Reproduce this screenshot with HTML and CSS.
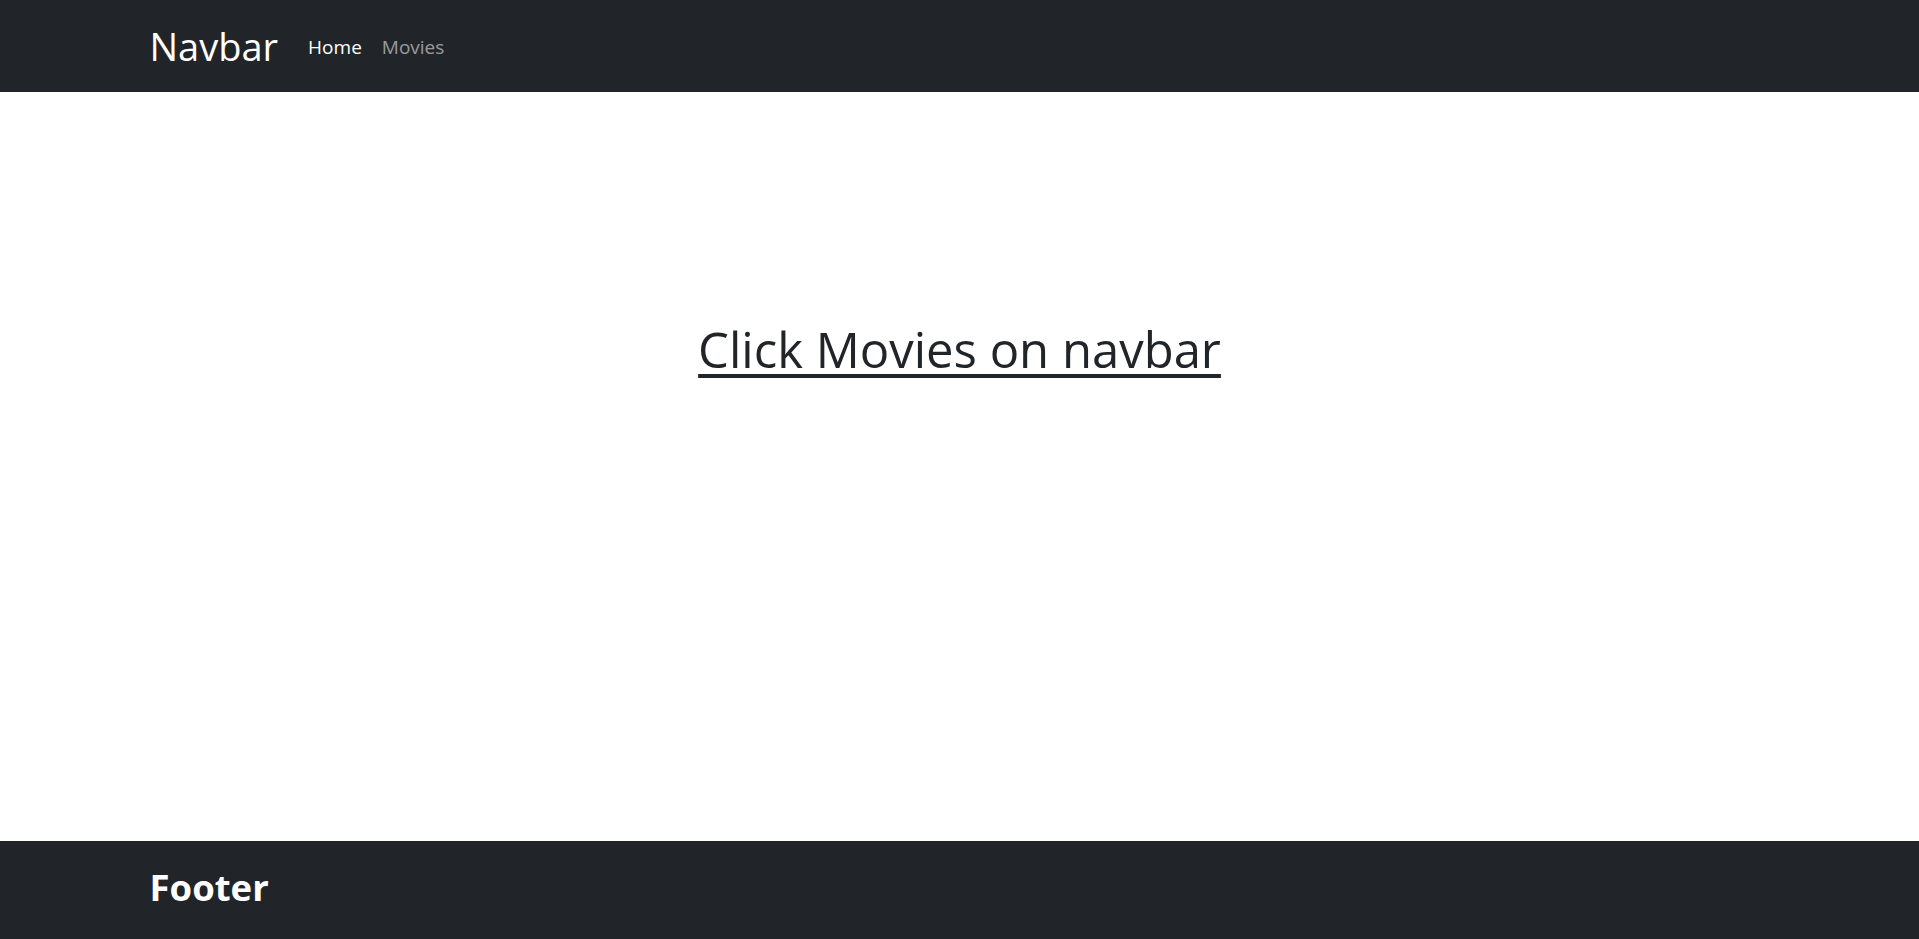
FILE: index.html
```html
<!DOCTYPE html>
<html lang="en">
<head>
<meta charset="utf-8">
<title>Navbar</title>
<link rel="stylesheet" href="styles.css">
</head>
<body>
<div class="page">
  <nav class="navbar">
    <div class="container nav-inner">
      <a class="brand" href="#">Navbar</a>
      <ul class="nav-links">
        <li><a class="nav-link active" href="#">Home</a></li>
        <li><a class="nav-link" href="#">Movies</a></li>
      </ul>
    </div>
  </nav>
  <main class="main">
    <h1 class="title"><a href="#">Click Movies on navbar</a></h1>
  </main>
  <footer class="footer">
    <div class="container">
      <h2 class="footer-title">Footer</h2>
    </div>
  </footer>
</div>
</body>
</html>
```

FILE: styles.css
```css
* { box-sizing: border-box; }
html, body { margin: 0; padding: 0; }
body {
  font-family: "Open Sans", "Noto Sans", sans-serif;
  color: #212529;
  background: #fff;
}
.page {
  min-height: 100vh;
  display: flex;
  flex-direction: column;
}
.container {
  width: 100%;
  max-width: 1650px;
  margin: 0 auto;
  padding: 0 15px;
}
.navbar {
  background: #212529;
  height: 92px;
  display: flex;
  align-items: center;
}
.nav-inner {
  display: flex;
  align-items: center;
}
.brand {
  color: #fff;
  text-decoration: none;
  font-size: 38px;
  line-height: 1;
  margin-right: 20px;
}
.nav-links {
  list-style: none;
  display: flex;
  margin: 0;
  padding: 0;
  padding-top: 2px;
}
.nav-link {
  display: block;
  padding: 8px 10px;
  font-size: 19px;
  text-decoration: none;
  color: rgba(255,255,255,.55);
}
.nav-link.active { color: #fff; }
.main {
  flex: 1;
  display: flex;
  justify-content: center;
  padding-top: 228px;
}
.title {
  margin: 0;
  font-size: 49px;
  font-weight: 500;
  line-height: 1.2;
}
.title a {
  color: #212529;
  text-decoration: underline;
  text-decoration-thickness: 4px;
  text-underline-offset: 6px;
}
.footer {
  background: #212529;
  height: 98px;
  display: flex;
  align-items: center;
  padding-bottom: 6px;
}
.footer-title {
  margin: 0;
  color: #fff;
  font-size: 36.5px;
  font-weight: 700;
  line-height: 1;
}
```
